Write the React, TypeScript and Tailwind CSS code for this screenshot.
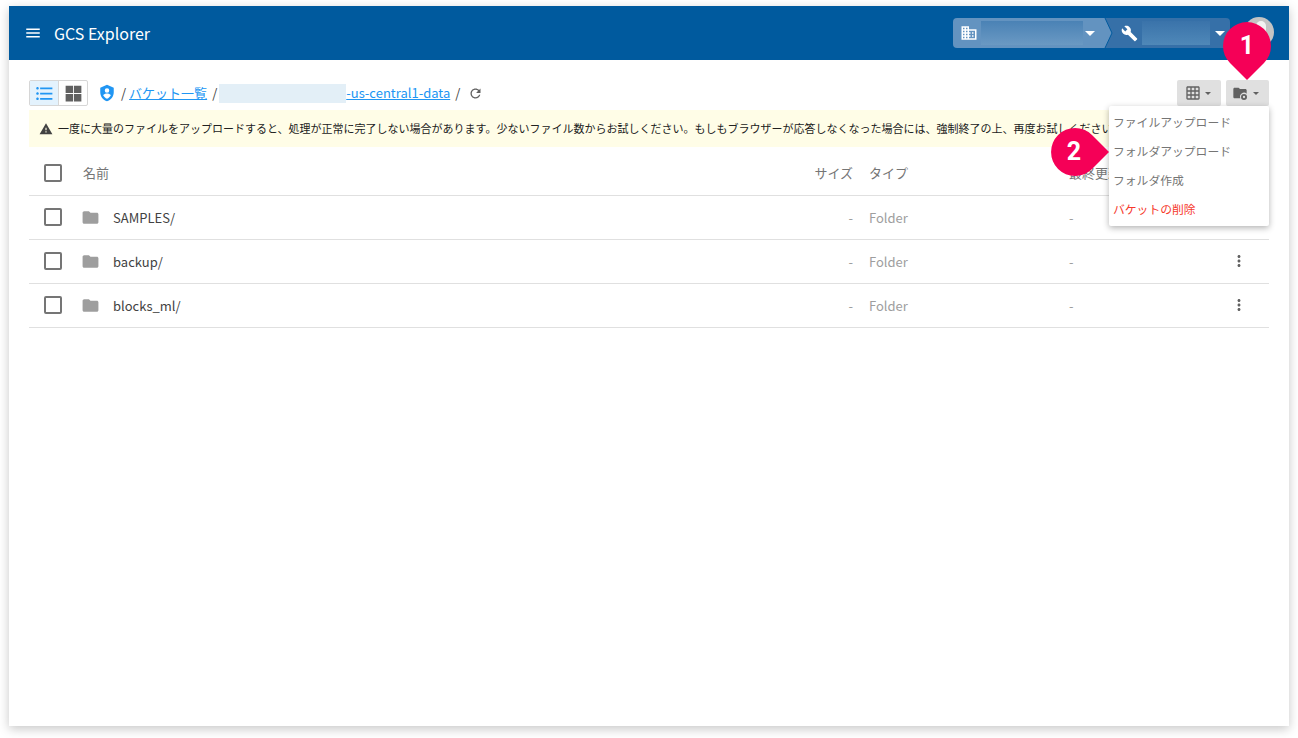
const font = "font-['Noto_Sans_CJK_JP','Noto_Sans',sans-serif]";

const paths = {
  menu: "M3 18h18v-2H3v2zm0-5h18v-2H3v2zm0-7v2h18V6H3z",
  list: "M4 10.5c-.83 0-1.5.67-1.5 1.5s.67 1.5 1.5 1.5 1.5-.67 1.5-1.5-.67-1.5-1.5-1.5zm0-6c-.83 0-1.5.67-1.5 1.5S3.17 7.5 4 7.5 5.5 6.83 5.5 6 4.83 4.5 4 4.5zm0 12c-.83 0-1.5.68-1.5 1.5s.68 1.5 1.5 1.5 1.5-.68 1.5-1.5-.67-1.5-1.5-1.5zM7 19h14v-2H7v2zm0-6h14v-2H7v2zm0-8v2h14V5H7z",
  grid: "M3 3h8.5v8.5H3zm9.5 0H21v8.5h-8.5zM3 12.5h8.5V21H3zm9.5 0H21V21h-8.5z",
  shield: "M12 1L3 5v6c0 5.55 3.84 10.74 9 12 5.16-1.26 9-6.45 9-12V5l-9-4zm0 4.5a3 3 0 110 6 3 3 0 010-6zm0 14c-2.2-.8-4.1-2.5-5.1-4.6.7-1.6 3.4-2.4 5.1-2.4s4.4.8 5.1 2.4c-1 2.1-2.9 3.8-5.1 4.6z",
  refresh: "M17.65 6.35C16.2 4.9 14.21 4 12 4c-4.42 0-7.99 3.58-7.99 8s3.57 8 7.99 8c3.73 0 6.84-2.55 7.73-6h-2.08c-.82 2.33-3.04 4-5.65 4-3.31 0-6-2.69-6-6s2.69-6 6-6c1.66 0 3.14.69 4.22 1.78L13 11h7V4l-2.35 2.35z",
  warning: "M1 21h22L12 2 1 21zm12-3h-2v-2h2v2zm0-4h-2v-4h2v4z",
  folder: "M10 4H4c-1.1 0-1.99.9-1.99 2L2 18c0 1.1.9 2 2 2h16c1.1 0 2-.9 2-2V8c0-1.1-.9-2-2-2h-8l-2-2z",
  more: "M12 8c1.1 0 2-.9 2-2s-.9-2-2-2-2 .9-2 2 .9 2 2 2zm0 2c-1.1 0-2 .9-2 2s.9 2 2 2 2-.9 2-2-.9-2-2-2zm0 6c-1.1 0-2 .9-2 2s.9 2 2 2 2-.9 2-2-.9-2-2-2z",
  domain: "M12 7V3H2v18h20V7H12zM6 19H4v-2h2v2zm0-4H4v-2h2v2zm0-4H4V9h2v2zm0-4H4V5h2v2zm4 12H8v-2h2v2zm0-4H8v-2h2v2zm0-4H8V9h2v2zm0-4H8V5h2v2zm10 12h-8v-2h2v-2h-2v-2h2v-2h-2V9h8v10zm-2-8h-2v2h2v-2zm0 4h-2v2h2v-2z",
  build: "M22.7 19l-9.1-9.1c.9-2.3.4-5-1.5-6.9-2-2-5-2.4-7.4-1.3L9 6 6 9 1.6 4.7C.4 7.1.9 10.1 2.9 12.1c1.9 1.9 4.6 2.4 6.9 1.5l9.1 9.1c.4.4 1 .4 1.4 0l2.3-2.3c.5-.4.5-1.1.1-1.4z",
  table: "M20 2H4c-1.1 0-2 .9-2 2v16c0 1.1.9 2 2 2h16c1.1 0 2-.9 2-2V4c0-1.1-.9-2-2-2zM8 20H4v-4h4v4zm0-6H4v-4h4v4zm0-6H4V4h4v4zm6 12h-4v-4h4v4zm0-6h-4v-4h4v4zm0-6h-4V4h4v4zm6 12h-4v-4h4v4zm0-6h-4v-4h4v4zm0-6h-4V4h4v4z",
  folderCog: "M10 4H4c-1.1 0-2 .9-2 2v12c0 1.1.9 2 2 2h8.6a6 6 0 0 1 9.4-7V8c0-1.1-.9-2-2-2h-8l-2-2z",
  cog: "M18 13.5a4.5 4.5 0 1 0 0 9 4.5 4.5 0 0 0 0-9zm0 2.8a1.7 1.7 0 1 1 0 3.4 1.7 1.7 0 0 1 0-3.4z",
};

const Icon = ({ d, className }: { d: string; className?: string }) => (
  <svg viewBox="0 0 24 24" fill="currentColor" className={className}>
    <path d={d} />
  </svg>
);

const Caret = ({ className }: { className?: string }) => (
  <span className={`w-0 h-0 border-x-[3px] border-t-[3px] border-x-transparent border-t-current ${className ?? ""}`} />
);

const Checkbox = () => (
  <span className="block w-[18px] h-[18px] border-2 border-[#757575] rounded-[2px] ml-[15px]" />
);

const Marker = ({ className }: { className?: string }) => (
  <svg viewBox="0 0 48 58" className={`absolute w-12 h-[58px] text-[#f50057] ${className ?? ""}`} fill="currentColor">
    <path d="M24 58 L7 41 A24 24 0 1 1 41 41 Z" />
  </svg>
);

const rows = ["SAMPLES/", "backup/", "blocks_ml/"];
const cols = "grid grid-cols-[54px_1fr_100px_200px_156px_44px] items-center";

export default function App() {
  return (
    <div className={`bg-white h-[738px] overflow-hidden pt-[6px] pl-[9px] ${font}`}>
      <div className="relative w-[1280px] h-[720px] bg-white shadow-[0_3px_10px_rgba(0,0,0,0.22)]">
        <header className="h-[54px] bg-[#005a9e] flex items-center text-white">
          <Icon d={paths.menu} className="w-[18px] h-[18px] ml-[15px]" />
          <h1 className="ml-[12px] text-[16px] leading-none">GCS Explorer</h1>
          <div className="ml-auto flex items-center h-[30px] mr-[59px] relative">
            <div className="w-[152px] h-full bg-[#6393c0] rounded-l-[4px] flex items-center pl-[7px]">
              <Icon d={paths.domain} className="w-[18px] h-[18px]" />
              <span className="ml-[3px] w-[102px] h-[24px] bg-linear-to-b from-[#4a82b5] to-[#6a99c3]" />
              <Caret className="ml-[2px] border-x-[5px]! border-t-[5px]! border-x-transparent!" />
            </div>
            <div className="w-[125px] h-full bg-[#3670a8] rounded-r-[4px] flex items-center pl-[16px]">
              <Icon d={paths.build} className="w-[17px] h-[17px]" />
              <span className="ml-[4px] w-[68px] h-[24px] bg-linear-to-b from-[#3a73aa] to-[#4f88b8]" />
              <Caret className="ml-[5px] border-x-[5px]! border-t-[5px]! border-x-transparent!" />
            </div>
            <svg viewBox="0 0 10 30" className="absolute left-[150px] top-0 w-[10px] h-[30px]">
              <path d="M0 0 L2 0 L9 15 L2 30 L0 30 Z" fill="#6393c0" />
              <path d="M2 0 L9 15 L2 30" fill="none" stroke="#005a9e" strokeWidth="1" />
            </svg>
          </div>
          <span className="absolute left-[1235px] top-[11px] w-[30px] h-[30px] rounded-full bg-[#c4c4c4]">
            <span className="absolute left-[12px] top-[4px] w-[10px] h-[14px] rounded-full bg-[#f2f2f2]" />
          </span>
        </header>

        <main className="px-5 pt-5">
          <div className="flex items-center h-[26px]">
            <div className="flex h-[26px] border border-[#d6d6d6] rounded-[2px]">
              <span className="w-[29px] bg-[#e3f2fd] flex items-center justify-center text-[#2196f3] border-r border-[#d6d6d6]">
                <Icon d={paths.list} className="w-[21px] h-[21px]" />
              </span>
              <span className="w-[28px] flex items-center justify-center text-[#616161]">
                <Icon d={paths.grid} className="w-[21px] h-[21px]" />
              </span>
            </div>
            <Icon d={paths.shield} className="w-[18px] h-[18px] ml-[10px] text-[#2196f3]" />
            <div className="flex items-center text-[13px] text-[#424242] ml-[5px]">
              <span className="mr-[3px]">/</span>
              <a className="text-[#2196f3] underline">バケット一覧</a>
              <span className="ml-[5px] mr-[2px]">/</span>
              <span className="w-[127px] h-[19px] bg-[#e3eff7]" />
              <a className="text-[#2196f3] underline">-us-central1-data</a>
              <span className="ml-[5px] mr-[4px]">/</span>
            </div>
            <Icon d={paths.refresh} className="w-[15px] h-[15px] ml-[4px] text-[#616161]" />
            <div className="ml-auto flex gap-[5px]">
              <span className="w-[44px] h-[26px] bg-[#e0e0e0] rounded-[2px] flex items-center pl-[8px] gap-[4px] text-[#616161]">
                <Icon d={paths.table} className="w-[16px] h-[16px]" />
                <Caret />
              </span>
              <span className="w-[43px] h-[26px] bg-[#e0e0e0] rounded-[2px] flex items-center pl-[6px] gap-[5px] text-[#616161]">
                <svg viewBox="0 0 24 24" fill="currentColor" className="w-[16px] h-[16px]">
                  <path d={paths.folderCog} />
                  <path d={paths.cog} fillRule="evenodd" />
                </svg>
                <Caret />
              </span>
            </div>
          </div>

          <div className="mt-1 h-[37px] bg-[#fffde7] flex items-center pl-[10px] text-[11px] text-[#212121] whitespace-nowrap overflow-hidden">
            <Icon d={paths.warning} className="w-[14px] h-[14px] mr-[5px] shrink-0 text-[#424242]" />
            一度に大量のファイルをアップロードすると、処理が正常に完了しない場合があります。少ないファイル数からお試しください。もしもブラウザーが応答しなくなった場合には、強制終了の上、再度お試しください。
          </div>

          <div className={`${cols} mt-1 h-[45px] border-b border-[#e0e0e0] text-[13px] text-[#757575]`}>
            <Checkbox />
            <span>名前</span>
            <span className="text-right pr-4">サイズ</span>
            <span>タイプ</span>
            <span>最終更新日</span>
            <span />
          </div>
          {rows.map((name) => (
            <div key={name} className={`${cols} h-[44px] border-b border-[#e0e0e0] text-[13px]`}>
              <span className="-mt-[2px]">
                <Checkbox />
              </span>
              <span className="flex items-center text-[#424242]">
                <Icon d={paths.folder} className="w-[19px] h-[19px] -ml-[2px] text-[#9e9e9e] mr-[13px]" />
                {name}
              </span>
              <span className="text-right pr-4 text-[#9e9e9e]">-</span>
              <span className="text-[#9e9e9e]">Folder</span>
              <span className="text-[#9e9e9e]">-</span>
              <span className="pl-[5px] -mt-[2px] text-[#616161]">
                <Icon d={paths.more} className="w-[18px] h-[18px]" />
              </span>
            </div>
          ))}
        </main>

        <ul className="absolute left-[1100px] top-[100px] w-[160px] h-[120px] bg-white rounded-[2px] shadow-[0_2px_6px_rgba(0,0,0,0.3)] py-[1px] text-[11.8px] text-[#757575]">
          <li className="h-[29px] leading-[29px] pl-[4px]">ファイルアップロード</li>
          <li className="h-[29px] leading-[29px] pl-[4px]">フォルダアップロード</li>
          <li className="h-[29px] leading-[29px] pl-[4px]">フォルダ作成</li>
          <li className="h-[29px] leading-[29px] pl-[4px] text-[#f6392c]">バケットの削除</li>
        </ul>

        <Marker className="left-[1214px] top-[16px]" />
        <span className="absolute left-[1214px] top-[16px] w-12 h-12 flex items-center justify-center text-white text-[25px] font-bold font-['Roboto',sans-serif]">1</span>
        <Marker className="left-[1047px] top-[117px] -rotate-90" />
        <span className="absolute left-[1041px] top-[122px] w-12 h-12 flex items-center justify-center text-white text-[25px] font-bold font-['Roboto',sans-serif]">2</span>
      </div>
    </div>
  );
}
